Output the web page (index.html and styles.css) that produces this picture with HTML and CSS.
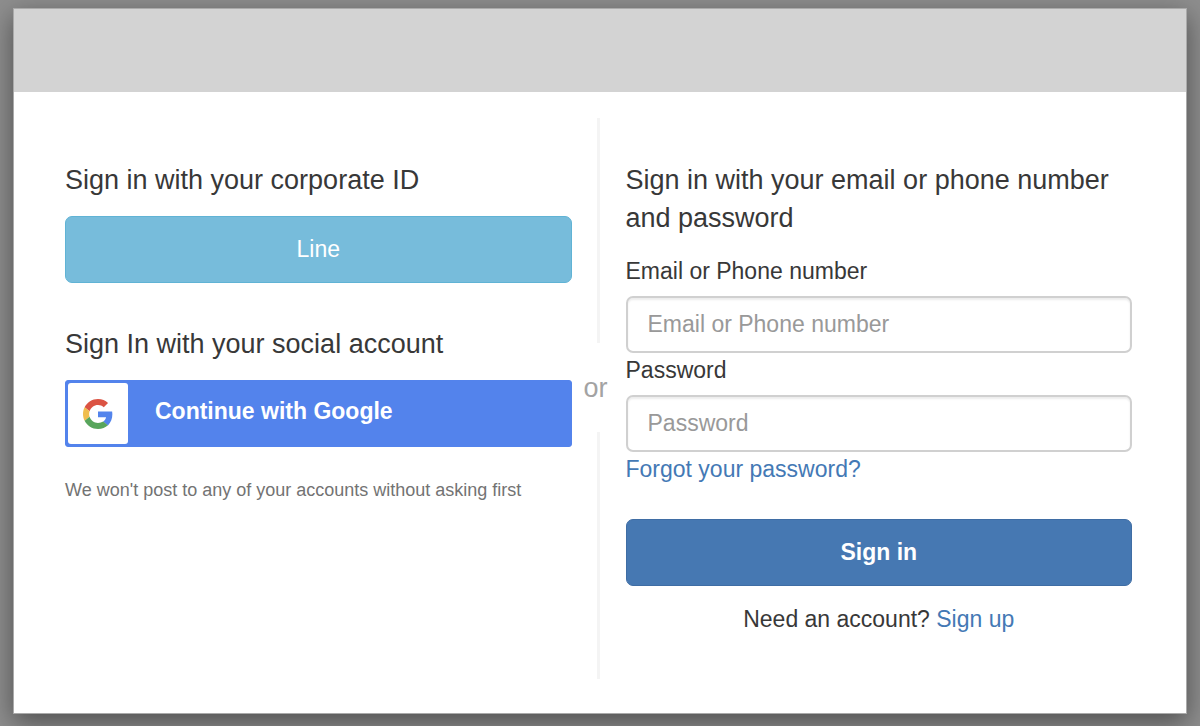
FILE: index.html
```html
<!DOCTYPE html>
<html lang="en">
<head>
    <meta charset="UTF-8">
    <meta name="viewport" content="width=device-width, initial-scale=1.0">
    <title>Sign in</title>
    <link rel="stylesheet" href="styles.css">
</head>
<body>
    <main class="modal">
        <header class="banner"></header>
        <div class="modal-body">
            <section class="panel">
                <h1 class="heading">Sign in with your corporate ID</h1>
                <button type="button" class="btn btn-line">Line</button>

                <h1 class="heading heading-social">Sign In with your social account</h1>
                <button type="button" class="btn btn-google">
                    <span class="google-logo">
                        <svg viewBox="0 0 48 48" width="30" height="30" aria-hidden="true">
                            <path fill="#db5343" d="M24 9.5c3.54 0 6.71 1.22 9.21 3.6l6.85-6.85C35.9 2.38 30.47 0 24 0 14.62 0 6.51 5.38 2.56 13.22l7.98 6.19C12.43 13.72 17.74 9.5 24 9.5z"/>
                            <path fill="#5384ec" d="M46.98 24.55c0-1.57-.15-3.09-.38-4.55H24v9.02h12.94c-.58 2.96-2.26 5.48-4.78 7.18l7.73 6c4.51-4.18 7.09-10.36 7.09-17.65z"/>
                            <path fill="#f0bd4d" d="M10.53 28.59c-.48-1.45-.76-2.99-.76-4.59s.27-3.14.76-4.59l-7.98-6.19C.92 16.46 0 20.12 0 24c0 3.88.92 7.54 2.56 10.78l7.97-6.19z"/>
                            <path fill="#58a55c" d="M24 48c6.48 0 11.93-2.13 15.89-5.81l-7.73-6c-2.15 1.45-4.92 2.3-8.16 2.3-6.26 0-11.57-4.22-13.47-9.91l-7.98 6.19C6.51 42.62 14.62 48 24 48z"/>
                        </svg>
                    </span>
                    <span class="google-text">Continue with Google</span>
                </button>
                <p class="note">We won't post to any of your accounts without asking first</p>
            </section>

            <div class="divider">
                <span class="or">or</span>
            </div>

            <form class="panel">
                <h1 class="heading">Sign in with your email or phone number and password</h1>
                <label for="username">Email or Phone number</label>
                <input type="text" id="username" name="username" placeholder="Email or Phone number">
                <label for="password">Password</label>
                <input type="password" id="password" name="password" placeholder="Password">
                <a class="forgot" href="#">Forgot your password?</a>
                <button type="submit" class="btn btn-primary">Sign in</button>
                <p class="signup">Need an account? <a href="#">Sign up</a></p>
            </form>
        </div>
    </main>
</body>
</html>
```

FILE: styles.css
```css
* {
    box-sizing: border-box;
}
body {
    margin: 0;
    padding: 8px 13px 12px;
    background: #8e8e8e;
    font-family: "Liberation Sans", Arial, sans-serif;
    font-size: 23px;
    line-height: 34px;
    color: #383838;
}
.modal {
    background: #fff;
    border: 1px solid #aaa;
    box-shadow: 0 8px 25px rgba(0, 0, 0, 0.45);
}
.banner {
    height: 83px;
    background: #d3d3d3;
}
.modal-body {
    display: grid;
    grid-template-columns: 1fr 54px 1fr;
    padding: 26px 54px 34px 51px;
}
.panel {
    display: flex;
    flex-direction: column;
    padding: 43px 0;
}
.heading {
    margin: 0 0 17px;
    font-size: 27px;
    font-weight: normal;
    line-height: 38px;
}
.heading-social {
    margin-top: 42px;
}

/* buttons */
.btn {
    width: 100%;
    height: 67px;
    border: 1px solid transparent;
    border-radius: 7px;
    font-family: inherit;
    font-size: 23px;
    color: #fff;
    cursor: pointer;
}
.btn-line {
    background: #77bcdb;
    border-color: #60b3d5;
}
.btn-google {
    display: flex;
    align-items: center;
    gap: 27px;
    padding: 0 2px;
    background: #5383ec;
    border-color: #5383ec;
    border-radius: 3px;
    font-weight: bold;
}
.google-logo {
    display: flex;
    align-items: center;
    justify-content: center;
    width: 60px;
    height: 61px;
    background: #fff;
    border-radius: 3px;
}
.google-text {
    padding-bottom: 4px;
}
.btn-primary {
    margin-top: 33px;
    background: #4678b2;
    border-color: #3f6da4;
    font-weight: bold;
}
.note {
    margin: 26px 0 0;
    font-size: 18px;
    color: #737373;
}

/* vertical line split by the "or" */
.divider {
    display: flex;
    flex-direction: column;
    align-items: center;
}
.divider::before,
.divider::after {
    content: "";
    width: 3px;
    background: #f4f4f4;
}
.divider::before {
    flex: 10;
}
.divider::after {
    flex: 11;
}
.or {
    padding: 28px 6px 27px 0;
    font-size: 27px;
    color: #a3a3a3;
}

/* form */
input {
    width: 100%;
    height: 57px;
    margin-top: 8px;
    padding: 0 20px;
    border: 2px solid #d0d0d0;
    border-radius: 7px;
    box-shadow: inset 0 2px 2px rgba(0, 0, 0, 0.075);
    font-family: inherit;
    font-size: 23px;
    color: #555;
}
input::placeholder {
    color: #999;
}
a {
    color: #4479b5;
    text-decoration: none;
}
a:hover {
    text-decoration: underline;
}
.forgot {
    align-self: flex-start;
}
.signup {
    margin: 16px 0 0;
    text-align: center;
}
```
